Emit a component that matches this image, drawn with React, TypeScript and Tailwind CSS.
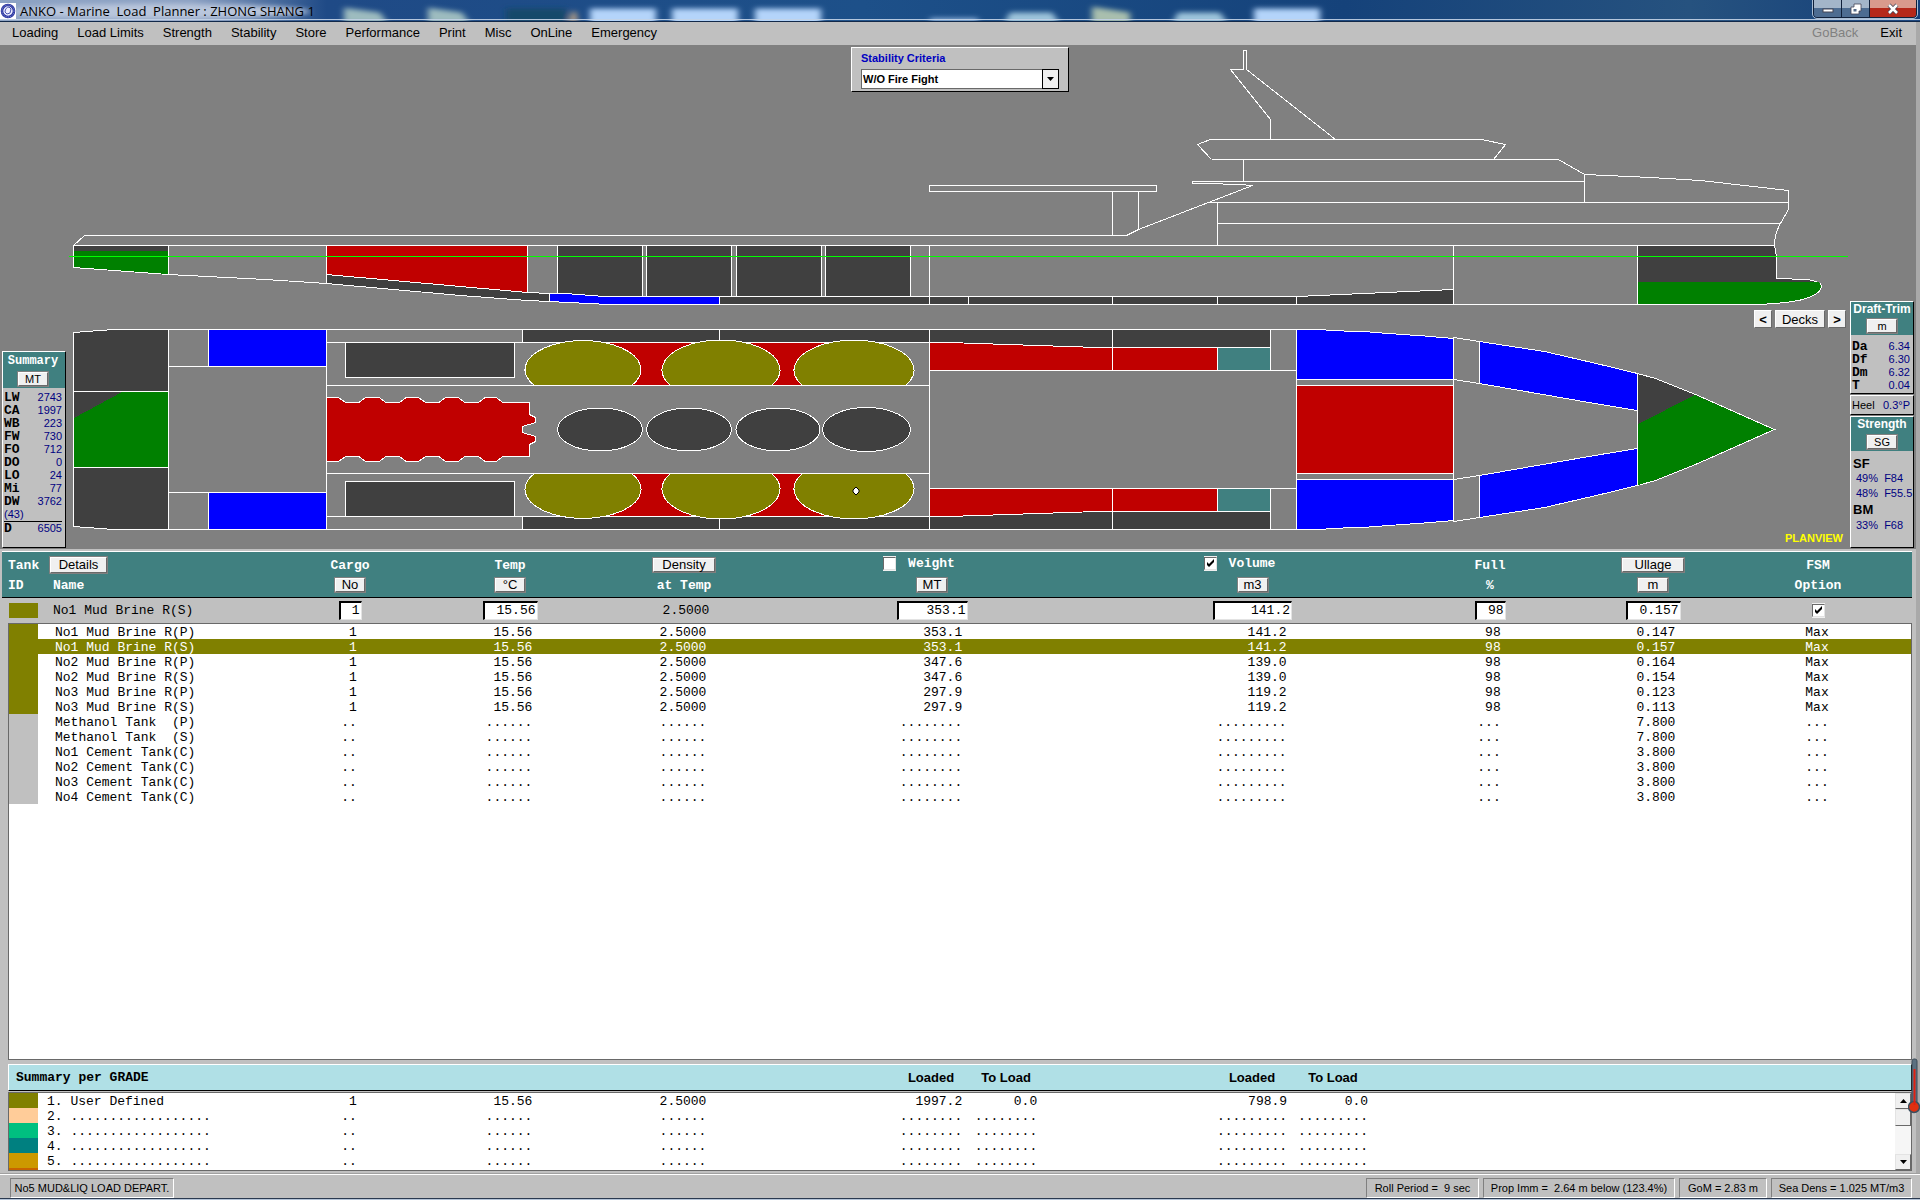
import { useState } from "react";
import type { ReactNode } from "react";

type Tank = {
  name: string;
  cargo?: string;
  temp?: string;
  density?: string;
  weight?: string;
  volume?: string;
  full?: string;
  ullage: string;
  fsm?: string;
};

type Point = [number, number];

const MENU = [
  "Loading",
  "Load Limits",
  "Strength",
  "Stability",
  "Store",
  "Performance",
  "Print",
  "Misc",
  "OnLine",
  "Emergency",
];

const brine = (
  name: string,
  weight: string,
  volume: string,
  ullage: string
): Tank => ({
  name,
  cargo: "1",
  temp: "15.56",
  density: "2.5000",
  weight,
  volume,
  full: "98",
  ullage,
  fsm: "Max",
});

const TANKS: Tank[] = [
  brine("No1 Mud Brine R(P)", "353.1", "141.2", "0.147"),
  brine("No1 Mud Brine R(S)", "353.1", "141.2", "0.157"),
  brine("No2 Mud Brine R(P)", "347.6", "139.0", "0.164"),
  brine("No2 Mud Brine R(S)", "347.6", "139.0", "0.154"),
  brine("No3 Mud Brine R(P)", "297.9", "119.2", "0.123"),
  brine("No3 Mud Brine R(S)", "297.9", "119.2", "0.113"),
  { name: "Methanol Tank  (P)", ullage: "7.800" },
  { name: "Methanol Tank  (S)", ullage: "7.800" },
  { name: "No1 Cement Tank(C)", ullage: "3.800" },
  { name: "No2 Cement Tank(C)", ullage: "3.800" },
  { name: "No3 Cement Tank(C)", ullage: "3.800" },
  { name: "No4 Cement Tank(C)", ullage: "3.800" },
];

const GRADES = [
  { color: "bg-[#808000]", name: "User Defined", used: true },
  { color: "bg-[#ffcc99]", name: "", used: false },
  { color: "bg-[#00c080]", name: "", used: false },
  { color: "bg-[#008080]", name: "", used: false },
  { color: "bg-[#cc9900]", name: "", used: false },
];

const SUMMARY = [
  ["LW", "2743"],
  ["CA", "1997"],
  ["WB", "223"],
  ["FW", "730"],
  ["FO", "712"],
  ["DO", "0"],
  ["LO", "24"],
  ["Mi", "77"],
  ["DW", "3762"],
];

const DRAFTS = [
  ["Da", "6.34"],
  ["Df", "6.30"],
  ["Dm", "6.32"],
  ["T", "0.04"],
];

// right-align a value in a field of fixed width, dots when it is empty
const field = (value: string | undefined, width: number) =>
  value ? value.padStart(width) : ".".repeat(width);

const PANEL =
  "bg-[#c0c0c0] border border-t-white border-l-white border-r-black border-b-black";
const SANS = "font-['Liberation_Sans',Arial,sans-serif]";
const MONO = "font-['Liberation_Mono','Courier_New',monospace]";

function Btn({
  children,
  className = "",
}: {
  children: ReactNode;
  className?: string;
}) {
  return (
    <button
      type="button"
      className={`${SANS} inline-flex items-center justify-center bg-[#f0f0f0] border border-t-white border-l-white border-r-[#696969] border-b-[#696969] outline outline-[#808080] text-black leading-none whitespace-nowrap ${className}`}
    >
      {children}
    </button>
  );
}

function Check({
  label,
  checked,
  onChange,
}: {
  label: string;
  checked: boolean;
  onChange: () => void;
}) {
  return (
    <span className="relative inline-flex w-[13px] h-[15px] bg-[#f0f0f0]">
      <input
        type="checkbox"
        aria-label={label}
        checked={checked}
        onChange={onChange}
        className="appearance-none w-[13px] h-[13px] mt-px bg-white border border-t-[#696969] border-l-[#696969] border-r-[#e3e3e3] border-b-[#e3e3e3]"
      />
      {checked && (
        <svg
          viewBox="0 0 13 13"
          className="absolute left-0 top-px w-[13px] h-[13px] pointer-events-none"
        >
          <path d="M3 5v3l2 2 5-5V2L5 7z" fill="#000" />
        </svg>
      )}
    </span>
  );
}

function TitleBar() {
  return (
    <header className="relative h-[22px] shrink-0 overflow-hidden bg-[#1b4b86] border-b border-[#12294a]">
      <svg
        className="absolute inset-0 w-full h-full"
        viewBox="0 0 1920 22"
        preserveAspectRatio="none"
        aria-hidden="true"
      >
        <defs>
          <linearGradient id="bar">
            <stop offset="0" stopColor="#8da3c4" />
            <stop offset="0.1" stopColor="#8ba0c2" />
            <stop offset="0.17" stopColor="#1f4a86" />
            <stop offset="0.45" stopColor="#1d5089" />
            <stop offset="0.7" stopColor="#15427a" />
            <stop offset="0.88" stopColor="#26527f" />
            <stop offset="1" stopColor="#15407a" />
          </linearGradient>
          <filter id="soft" x="-20%" y="-50%" width="140%" height="200%">
            <feGaussianBlur stdDeviation="3" />
          </filter>
        </defs>
        <rect width="1920" height="22" fill="url(#bar)" />
        <g filter="url(#soft)">
          <ellipse cx="160" cy="12" rx="150" ry="8" fill="#b9c6dc" />
          <path d="M344 8l36 5 8 12h-44z" fill="#9dbcbf" />
          <path d="M428 8l34 5 8 12h-42z" fill="#9dbcbf" />
          <rect x="506" y="9" width="60" height="16" fill="#17486b" />
          <path d="M572 12h4l2 12h-10z" fill="#b59f86" />
          <rect x="590" y="9" width="66" height="20" fill="#b4d4fa" />
          <rect x="672" y="9" width="66" height="20" fill="#b4d4fa" />
          <rect x="755" y="9" width="66" height="20" fill="#b4d4fa" />
          <rect x="930" y="19" width="48" height="6" fill="#8fb4dd" />
          <path d="M1010 13h42l8 12h-56z" fill="#9ec5dc" />
          <path d="M1092 7l38 6v12h-38z" fill="#a9bfae" />
          <path d="M1178 13h42l8 12h-56z" fill="#9ec5dc" />
          <rect x="1254" y="9" width="66" height="20" fill="#b4d4fa" />
        </g>
        <rect y="20" width="1920" height="1" fill="#c3d3e6" />
      </svg>
      <div className="relative flex items-start justify-between">
        <div className="flex items-center gap-1 h-[21px]">
          <svg viewBox="0 0 16 16" className="w-4 h-4 bg-white">
            <circle
              cx="8"
              cy="8"
              r="6"
              fill="#eef"
              stroke="#2a35a0"
              strokeWidth="2.6"
            />
            <circle
              cx="8"
              cy="8"
              r="6"
              fill="none"
              stroke="#8d97d8"
              strokeDasharray="1 1"
            />
            <path
              d="M5 9c0-3 2-5 4-5l2 2-1 4-3 1z"
              fill="none"
              stroke="#4a55b0"
            />
          </svg>
          <h1 className="font-['Open_Sans','Segoe_UI',sans-serif] text-[13px] leading-5 whitespace-pre text-black">
            ANKO - Marine  Load  Planner : ZHONG SHANG 1
          </h1>
        </div>
        <div className="flex mr-[3px] h-[18px] rounded-b border border-t-0 border-[#10203a] outline outline-[#a9bdd4] overflow-hidden">
          <button
            type="button"
            aria-label="Minimize"
            className="w-7 flex items-center justify-center bg-linear-to-b from-[#a3b5c9] from-45% to-[#4d6c91] to-50% border-r border-[#10203a]"
          >
            <svg viewBox="0 0 12 12" className="w-3 h-3">
              <rect x="1" y="6" width="10" height="3" fill="#fff" stroke="#445" />
            </svg>
          </button>
          <button
            type="button"
            aria-label="Restore"
            className="w-7 flex items-center justify-center bg-linear-to-b from-[#a3b5c9] from-45% to-[#4d6c91] to-50% border-r border-[#10203a]"
          >
            <svg viewBox="0 0 12 12" className="w-3 h-3">
              <path
                d="M4 1h7v7H9v3H1V4h3z"
                fill="#fff"
                stroke="#445"
                strokeWidth=".8"
              />
              <rect x="3.500" y="6" width="3" height="2.500" fill="#556b88" />
            </svg>
          </button>
          <button
            type="button"
            aria-label="Close"
            className="w-[46px] flex items-center justify-center bg-linear-to-b from-[#d99a8d] from-45% to-[#b5281a] to-50%"
          >
            <svg viewBox="0 0 12 12" className="w-3 h-3">
              <path d="M2 2l8 8M10 2l-8 8" stroke="#445" strokeWidth="4" />
              <path d="M2 2l8 8M10 2l-8 8" stroke="#fff" strokeWidth="2.500" />
            </svg>
          </button>
        </div>
      </div>
    </header>
  );
}

const DARK = "#404040";
const RED = "#c00000";
const BLUE = "#0000ff";
const GREEN = "#008000";
const OLIVE = "#808000";
const TEAL = "#408080";

const pts = (list: Point[]) => list.map((p) => p.join(",")).join(" ");

// a run of the wavy edge on the centre mud tank
const wave: Point[] = [326.5, 379, 418.5, 458, 496].flatMap((x, i) => {
  const end = i === 0 ? 338.5 : x;
  return [
    [end, 397.5],
    [end + 7, 402.5],
    ...(i < 4 ? [[end + 20.5, 402.5], [end + 27, 397.5]] : []),
  ] as Point[];
});

const mudTop: Point[] = [
  [326.5, 397.5],
  ...wave,
  [529.5, 402.5],
  [529.5, 414.5],
  [535.5, 417.5],
  [535.5, 422.5],
  [522.5, 426.5],
];
const mudTank: Point[] = [
  ...mudTop,
  ...mudTop.map(([x, y]): Point => [x, 859 - y]).reverse(),
];

// everything that the plan view has on both sides of the centre line
function PlanSide() {
  return (
    <>
      <polygon
        points="73.500,391.500 73.500,332.500 113.500,329.500 168.500,329.500 168.500,391.500"
        fill={DARK}
      />
      <path d="M168.500 329.500H1296.500M168.500 366.500h158" />
      <rect x="208.500" y="329.500" width="118" height="37" fill={BLUE} />
      <path d="M326.500 342.500h603M326.500 385.500h603" />
      <rect x="345.500" y="342.500" width="169" height="35" fill={DARK} />
      <rect x="522.500" y="329.500" width="197" height="13" fill={DARK} />
      <rect x="719.500" y="329.500" width="210" height="13" fill={DARK} />
      <rect x="582.500" y="342.500" width="272" height="43" fill={RED} />
      <path d="M534.500 385.500A58 29 0 1 1 631.500 385.500z" fill={OLIVE} />
      <path d="M670.500 385.500A59 30 0 1 1 771.500 385.500z" fill={OLIVE} />
      <path d="M802.500 385.500A60 30 0 1 1 905.500 385.500z" fill={OLIVE} />
      <path d="M929.500 329.500h183v18h-15L948.500 342.500h-19z" fill={DARK} />
      <rect x="1112.500" y="329.500" width="158" height="18" fill={DARK} />
      <path d="M929.500 342.500h19L1097.500 347.500h15v23h-183z" fill={RED} />
      <rect x="1112.500" y="347.500" width="105" height="23" fill={RED} />
      <rect x="1217.500" y="347.500" width="53" height="23" fill={TEAL} />
      <path d="M1270.500 370.500h26" />
      <polygon
        points="1296.500,329.500 1317.500,329.500 1343.500,331 1369.500,332 1388.500,333.500 1424.500,336 1453.500,338.500 1453.500,379.500 1296.500,379.500"
        fill={BLUE}
      />
      <path d="M1296.500 385.500h157M1453.500 337.500L1479.500 341.500M1453.500 379.500L1479.500 383.500" />
      <polygon
        points="1479.500,341.500 1544.500,351.500 1600.500,364.500 1637.500,373.500 1637.500,410.500 1600.500,404.500 1479.500,383.500"
        fill={BLUE}
      />
    </>
  );
}

function ShipDrawing() {
  return (
    <svg
      viewBox="0 45 1916 504"
      className="block w-full h-auto"
      shapeRendering="crispEdges"
      stroke="#fff"
      fill="none"
      role="img"
      aria-label="Ship profile and plan view"
    >
      {/* profile: hull and superstructure */}
      <path d="M73.500 245.500L84.500 235.500H1126.500L1138.500 229.500L1252.500 185.500L1238.500 184.500L1207.500 183.500H1192.500V181.500H1584.500" />
      <path d="M929.500 185.500h227v6h-227zM1112.500 191.500v44M1138.500 191.500v38" />
      <path d="M1217.500 245.500v-43M1209.500 202.500H1788.500M1217.500 223.500H1780.500" />
      <path d="M1211.500 159.500L1197.500 144.500L1210.500 139.500H1481.500L1505.500 144.500L1493.500 159.500" />
      <path d="M1211.500 159.500H1558.500L1584.500 174.500L1650.500 177.500L1700.500 180.500L1788.500 190.500V209.500L1780.500 223.500Q1774.500 233.500 1774.500 245.500" />
      <path d="M1584.500 174.500v28M1243.500 159.500v22" />
      <path d="M1335.500 139.500L1246.500 69.500V50.500H1243.500V69.500H1230.500L1270.500 119.500V139.500" />

      {/* profile: tanks */}
      <polygon points="73.500,245.500 168.500,245.500 168.500,274.500 73.500,267.500" fill={DARK} />
      <polygon points="74,251 168,251 168,274 74,267" fill={GREEN} stroke="none" />
      <path d="M168.500 274.500L265.500 279.500L326.500 283.500" />
      <polygon
        points="326.500,274.500 527.500,292.500 549.500,293.500 549.500,301.500 527.500,300.500 460.500,295.500 326.500,283.500"
        fill={DARK}
      />
      <polygon points="326.500,245.500 527.500,245.500 527.500,292.500 326.500,274.500" fill={RED} />
      <rect x="557.500" y="245.500" width="85" height="51" fill={DARK} />
      <rect x="646.500" y="245.500" width="85" height="51" fill={DARK} />
      <rect x="736.500" y="245.500" width="85" height="51" fill={DARK} />
      <rect x="825.500" y="245.500" width="85" height="51" fill={DARK} />
      <polygon
        points="549.500,293.500 565.500,293.500 604.500,296.500 719.500,296.500 719.500,304.500 608.500,304.500 549.500,301.500"
        fill={BLUE}
      />
      <polygon
        points="719.500,296.500 1296.500,296.500 1453.500,289.500 1453.500,304.500 719.500,304.500"
        fill={DARK}
      />
      <path d="M968.500 296.500v8M1112.500 296.500v8M1217.500 296.500v8M1296.500 296.500v8" />
      <path d="M929.500 245.500v59M1453.500 245.500v59" />
      <path
        d="M1637.500 245.500H1774.500L1776.500 256.500V278.500L1806.500 279.500Q1821.500 281.500 1821.500 286.500Q1820.500 295.500 1798.500 300.500L1786.500 302.500L1760.500 304.500H1637.500z"
        fill={DARK}
      />
      <path
        d="M1638 282H1819L1821 286Q1820 295 1798 300L1786 302L1760 304H1638z"
        fill={GREEN}
        stroke="none"
      />
      <path d="M73.500 245.500H1774.500M719.500 304.500H1760.500" />
      <path d="M69 256.500H1848" stroke="#00ff00" />

      {/* plan view */}
      <PlanSide />
      <g transform="matrix(1 0 0 -1 0 859)">
        <PlanSide />
      </g>
      <rect x="73.500" y="391.500" width="95" height="76" fill={DARK} />
      <path d="M74 418L122 392H168V467H74z" fill={GREEN} stroke="none" />
      <path d="M168.500 329.500v200M326.500 329.500v200M929.500 329.500v200M1296.500 329.500v200" />
      <polygon points={pts(mudTank)} fill={RED} />
      <ellipse cx="600" cy="429.500" rx="42.500" ry="21.500" fill={DARK} />
      <ellipse cx="689" cy="429.500" rx="42.500" ry="21.500" fill={DARK} />
      <ellipse cx="778" cy="429.500" rx="42" ry="21.500" fill={DARK} />
      <ellipse cx="866.500" cy="429.500" rx="44" ry="22" fill={DARK} />
      <rect x="1296.500" y="385.500" width="157" height="88" fill={RED} />
      <path d="M1453.500 337.500v184" />
      <path
        d="M1637.500 373.500L1655.500 378.500L1695.500 394.500L1774.500 429.500L1695.500 464.500L1655.500 480.500L1637.500 485.500z"
        fill={DARK}
      />
      <path
        d="M1638 424L1695 395L1773 429.500L1695 464L1655 480L1638 485z"
        fill={GREEN}
        stroke="none"
      />
      <path
        d="M856 487l3 3v2l-3 3-3-3v-2z"
        fill="#fff"
        stroke="#000"
        shapeRendering="auto"
      />
    </svg>
  );
}

function Row({ name, value }: { name: string; value: string }) {
  return (
    <div className="flex justify-between items-center h-[13px]">
      <dt className={`${MONO} text-[13px] leading-[13px] font-bold`}>{name}</dt>
      <dd className="text-[11px] leading-[13px] text-[#000080]">{value}</dd>
    </div>
  );
}

function SummaryPanel() {
  return (
    <section className={`${PANEL} w-16 h-[197px] flex flex-col`}>
      <div className="bg-[#408080] h-9 flex flex-col items-center shrink-0 pt-[3px] pr-[2px] gap-1">
        <h2 className={`${MONO} text-[12px] leading-[13px] font-bold text-white`}>
          Summary
        </h2>
        <Btn className="w-[30px] h-[14px] text-[11px]">MT</Btn>
      </div>
      <dl className="pl-px pr-[3px] pt-[3px]">
        {SUMMARY.map(([name, value]) => (
          <Row key={name} name={name} value={value} />
        ))}
        <dd className="text-[11px] leading-[13px] text-[#000080] border-b border-black">
          (43)
        </dd>
        <Row name="D" value="6505" />
      </dl>
    </section>
  );
}

function DraftPanels() {
  return (
    <div className="w-16 flex flex-col gap-px">
      <section className={`${PANEL} h-[93px]`}>
        <div className="bg-[#408080] h-[33px] flex flex-col items-center pt-px gap-[3px]">
          <h2 className="text-[12px] leading-[13px] font-bold text-white whitespace-nowrap">
            Draft-Trim
          </h2>
          <Btn className="w-[30px] h-[14px] text-[11px]">m</Btn>
        </div>
        <dl className="pl-px pr-[3px] pt-[5px]">
          {DRAFTS.map(([name, value]) => (
            <Row key={name} name={name} value={value} />
          ))}
        </dl>
      </section>
      <section
        className={`${PANEL} h-5 flex items-center justify-between pl-px pr-[3px] text-[11px]`}
      >
        <span>Heel</span>
        <span className="text-[#000080]">0.3°P</span>
      </section>
      <section className={`${PANEL} h-[132px]`}>
        <div className="bg-[#408080] h-[34px] flex flex-col items-center pt-px gap-1">
          <h2 className="text-[12px] leading-[13px] font-bold text-white">
            Strength
          </h2>
          <Btn className="w-[30px] h-[14px] text-[11px]">SG</Btn>
        </div>
        <div className="pl-[2px] pt-[5px] text-[11px] leading-[15px] text-[#000080] whitespace-pre">
          <h3 className="text-[13px] font-bold text-black">SF</h3>
          <p className="pl-[3px]">49%  F84</p>
          <p className="pl-[3px]">48%  F55.5</p>
          <h3 className="text-[13px] leading-[17px] font-bold text-black">BM</h3>
          <p className="pl-[3px]">33%  F68</p>
        </div>
      </section>
    </div>
  );
}

function TankColumns({ first }: { first: string }) {
  return (
    <colgroup>
      <col className={first} />
      <col className="w-[262px]" />
      <col className="w-[98px]" />
      <col className="w-[222px]" />
      <col className="w-[126px]" />
      <col className="w-[370px]" />
      <col />
      <col className="w-[204px]" />
      <col className="w-[122px]" />
      <col className="w-[198px]" />
    </colgroup>
  );
}

function Entry({
  label,
  value,
  className,
}: {
  label: string;
  value: string;
  className: string;
}) {
  return (
    <input
      aria-label={label}
      defaultValue={value}
      className={`h-[19px] bg-white text-right text-[13px] pr-px border-2 border-t-black border-l-black border-r border-b border-r-[#e3e3e3] border-b-[#e3e3e3] align-middle ${className}`}
    />
  );
}

function GradeColumns() {
  return (
    <colgroup>
      <col className="w-[29px]" />
      <col className="w-[262px]" />
      <col className="w-[98px]" />
      <col className="w-[222px]" />
      <col className="w-[126px]" />
      <col className="w-[142px]" />
      <col className="w-[86px]" />
      <col className="w-[64px]" />
      <col />
      <col className="w-[86px]" />
      <col className="w-[76px]" />
      <col className="w-[524px]" />
    </colgroup>
  );
}

export default function App() {
  const [selected, setSelected] = useState(1);
  const [byWeight, setByWeight] = useState(false);
  const [byVolume, setByVolume] = useState(true);
  const [fsm, setFsm] = useState(true);
  const tank = TANKS[selected];

  return (
    <div
      className={`${SANS} min-h-screen flex flex-col bg-[#c0c0c0] text-black leading-none`}
    >
      <TitleBar />
      <div className="grow flex flex-col border-r-4 border-[#a9a9a9]">
        <nav className="h-[23px] flex items-center justify-between pl-3 pr-[14px] pb-[2px] text-[13px]">
          <div className="flex gap-[19px]">
            {MENU.map((item) => (
              <button key={item} type="button">
                {item}
              </button>
            ))}
          </div>
          <div className="flex gap-[22px]">
            <button type="button" className="text-[#808080]">
              GoBack
            </button>
            <button type="button">Exit</button>
          </div>
        </nav>

        {/* Ship view with its floating panels */}
        <div className="relative bg-[#808080]">
          <ShipDrawing />
          <div
            className={`${PANEL} absolute left-[851px] top-[2px] w-[218px] h-[45px] pl-[9px] pt-[3px]`}
          >
            <label
              htmlFor="criteria"
              className="block text-[11px] leading-[15px] font-bold text-[#0000c0]"
            >
              Stability Criteria
            </label>
            <div className="relative w-[198px] mt-[3px]">
              <select
                id="criteria"
                className="appearance-none block w-full h-5 bg-white border border-[#696969] pl-px text-[11px] font-bold"
              >
                <option>W/O Fire Fight</option>
              </select>
              <span className="absolute right-0 top-0 w-[17px] h-5 bg-[#f0f0f0] border border-black flex items-center justify-center pointer-events-none">
                <svg viewBox="0 0 7 4" className="w-[7px] h-1">
                  <path d="M0 0h7L3.500 4z" />
                </svg>
              </span>
            </div>
          </div>
          <div className="absolute left-[2px] bottom-px">
            <SummaryPanel />
          </div>
          <div className="absolute right-[2px] bottom-px">
            <DraftPanels />
          </div>
          <div className="absolute right-[70px] top-[265px] flex gap-[3px] text-[13px]">
            <Btn className="w-[18px] h-[18px] font-bold">&lt;</Btn>
            <Btn className="w-[50px] h-[18px]">Decks</Btn>
            <Btn className="w-[18px] h-[18px] font-bold">&gt;</Btn>
          </div>
          <div className="absolute right-[73px] bottom-1 text-[11px] leading-[13px] font-bold text-[#ffff00]">
            PLANVIEW
          </div>
        </div>

        <main className={`${MONO} grow flex flex-col pt-[2px] text-[13px]`}>
          <div className="mr-1">
            <table className="w-full table-fixed border-collapse text-center">
              <TankColumns first="w-[38px]" />
              <thead className="bg-[#408080] text-white border-l-2 border-t border-t-white border-l-[#c0c0c0] border-b border-b-black">
                <tr className="h-[26px]">
                  <th className="text-left pl-[6px] pt-[2px]">Tank</th>
                  <th className="text-left pl-[11px]">
                    <Btn className="w-[57px] h-4 text-[13px] font-normal">
                      Details
                    </Btn>
                  </th>
                  <th className="pt-[2px]">Cargo</th>
                  <th className="pt-[2px]">Temp</th>
                  <th>
                    <Btn className="w-[62px] h-[14px] text-[13px] font-normal">
                      Density
                    </Btn>
                  </th>
                  <th>
                    <span className="inline-flex items-center gap-3 pr-[26px]">
                      <Check
                        label="Weight"
                        checked={byWeight}
                        onChange={() => setByWeight(!byWeight)}
                      />
                      Weight
                    </span>
                  </th>
                  <th>
                    <span className="inline-flex items-center gap-3 pr-[26px]">
                      <Check
                        label="Volume"
                        checked={byVolume}
                        onChange={() => setByVolume(!byVolume)}
                      />
                      Volume
                    </span>
                  </th>
                  <th className="pt-[2px]">Full</th>
                  <th>
                    <Btn className="w-[62px] h-[14px] text-[13px] font-normal">
                      Ullage
                    </Btn>
                  </th>
                  <th className="pl-[10px] pt-[2px]">FSM</th>
                </tr>
                <tr className="h-5 align-top">
                  <th className="text-left pl-[6px] pt-px">ID</th>
                  <th className="text-left pl-[14px] pt-px">Name</th>
                  <th>
                    <Btn className="w-[30px] h-[14px] text-[13px] font-normal">No</Btn>
                  </th>
                  <th>
                    <Btn className="w-[30px] h-[14px] text-[13px] font-normal">°C</Btn>
                  </th>
                  <th className="pt-px">at Temp</th>
                  <th>
                    <Btn className="w-[30px] h-[14px] text-[13px] font-normal">MT</Btn>
                  </th>
                  <th>
                    <Btn className="w-[30px] h-[14px] text-[13px] font-normal">m3</Btn>
                  </th>
                  <th className="pt-px">%</th>
                  <th>
                    <Btn className="w-[30px] h-[14px] text-[13px] font-normal">m</Btn>
                  </th>
                  <th className="pt-px pl-[10px]">Option</th>
                </tr>
              </thead>
              <tbody key={selected}>
                <tr className="h-[25px]">
                  <td className="pl-2">
                    <div className="w-[29px] h-[15px] bg-[#808000]" />
                  </td>
                  <td className="text-left pl-[14px] whitespace-pre">
                    {tank.name}
                  </td>
                  <td>
                    <Entry label="Cargo" value={tank.cargo ?? ""} className="w-[23px]" />
                  </td>
                  <td>
                    <Entry label="Temp" value={tank.temp ?? ""} className="w-[55px]" />
                  </td>
                  <td className="whitespace-pre pl-1">{field(tank.density, 6)}</td>
                  <td>
                    <Entry label="Weight" value={tank.weight ?? ""} className="w-[71px]" />
                  </td>
                  <td>
                    <Entry label="Volume" value={tank.volume ?? ""} className="w-[79px]" />
                  </td>
                  <td>
                    <Entry label="Full %" value={tank.full ?? ""} className="w-[31px]" />
                  </td>
                  <td>
                    <Entry label="Ullage" value={tank.ullage} className="w-[55px]" />
                  </td>
                  <td className="pl-[10px] align-middle">
                    <div className="flex justify-center">
                      <Check label="FSM option" checked={fsm} onChange={() => setFsm(!fsm)} />
                    </div>
                  </td>
                </tr>
              </tbody>
            </table>
          </div>

          <div className="grow ml-2 mr-1 min-h-[437px] bg-white border border-[#696969]">
            <table className="w-full table-fixed text-center whitespace-pre">
              <TankColumns first="w-[29px]" />
              <tbody>
                {TANKS.map((t, i) => (
                  <tr
                    key={t.name}
                    onClick={() => setSelected(i)}
                    className={`h-[15px] align-bottom ${i === selected ? "bg-[#808000] text-white" : ""}`}
                  >
                    <td className={t.cargo ? "bg-[#808000]" : "bg-[#c0c0c0]"} />
                    <td className="text-left pl-[17px]">{t.name}</td>
                    <td>{field(t.cargo, 2)}</td>
                    <td>{field(t.temp, 6)}</td>
                    <td>{field(t.density, 6)}</td>
                    <td>{field(t.weight, 8)}</td>
                    <td>{field(t.volume, 9)}</td>
                    <td>{field(t.full, 3)}</td>
                    <td>{field(t.ullage, 6)}</td>
                    <td className="pl-[10px]">{field(t.fsm, 3)}</td>
                  </tr>
                ))}
              </tbody>
            </table>
          </div>

          <div className="ml-2 mr-1 mt-1 pr-4 bg-[#b0e0e6] border border-t-white border-l-white border-r-black border-b-black">
            <table className="w-full table-fixed text-center">
              <GradeColumns />
              <thead>
                <tr className="h-[25px]">
                  <th colSpan={6} className="text-left pl-[7px]">
                    Summary per GRADE
                  </th>
                  <th className={SANS}>Loaded</th>
                  <th className={`${SANS} whitespace-nowrap`}>To Load</th>
                  <th />
                  <th className={SANS}>Loaded</th>
                  <th className={SANS}>To Load</th>
                  <th />
                </tr>
              </thead>
            </table>
          </div>
          <div className="ml-2 mr-1 mt-px mb-[2px] h-[79px] flex bg-white border border-[#696969] overflow-hidden">
            <div className="grow h-full overflow-hidden">
              <table className="w-full table-fixed text-center whitespace-pre">
                <GradeColumns />
                <tbody>
                  {GRADES.map((grade, i) => (
                    <tr key={grade.color} className="h-[15px] align-bottom">
                      <td className={grade.color} />
                      <td className="text-left pl-[9px]">
                        {`${i + 1}. ${grade.name || ".".repeat(18)}`}
                      </td>
                      <td>{field(grade.used ? "1" : "", 2)}</td>
                      <td>{field(grade.used ? "15.56" : "", 6)}</td>
                      <td>{field(grade.used ? "2.5000" : "", 6)}</td>
                      <td />
                      <td>{field(grade.used ? "1997.2" : "", 8)}</td>
                      <td>{field(grade.used ? "0.0" : "", 8)}</td>
                      <td />
                      <td>{field(grade.used ? "798.9" : "", 9)}</td>
                      <td>{field(grade.used ? "0.0" : "", 9)}</td>
                      <td />
                    </tr>
                  ))}
                </tbody>
              </table>
              <div className="w-[29px] h-[2px] bg-[#c86400]" />
            </div>
            <div className="w-4 shrink-0 h-full flex flex-col bg-[#f6f6f6]">
              <button
                type="button"
                aria-label="Scroll up"
                className="h-4 flex items-center justify-center bg-[#f0f0f0] border border-[#e3e3e3] border-r-[#696969] border-b-[#696969]"
              >
                <svg viewBox="0 0 7 4" className="w-[7px] h-1">
                  <path d="M0 4h7L3.500 0z" />
                </svg>
              </button>
              <div className="h-[17px] bg-[#f0f0f0] border border-[#e3e3e3] border-r-[#696969] border-b-[#696969]" />
              <button
                type="button"
                aria-label="Scroll down"
                className="mt-auto h-4 flex items-center justify-center bg-[#f0f0f0] border border-[#e3e3e3] border-r-[#696969] border-b-[#696969]"
              >
                <svg viewBox="0 0 7 4" className="w-[7px] h-1">
                  <path d="M0 0h7L3.500 4z" />
                </svg>
              </button>
            </div>
          </div>
        </main>
      </div>

      {/* Status bar */}
      <footer className="relative shrink-0 border-t border-[#a0a0a0]">
        <div className="flex gap-1 h-6 pt-[3px] pl-[10px] pr-2 border-t border-white text-[11px] whitespace-pre">
          <StatusCell className="w-[164px] mr-auto">
            No5 MUD&amp;LIQ LOAD DEPART.
          </StatusCell>
          <StatusCell className="w-[113px]">Roll Period =  9 sec</StatusCell>
          <StatusCell className="w-[192px]">
            Prop Imm =  2.64 m below (123.4%)
          </StatusCell>
          <StatusCell className="w-[88px]">GoM = 2.83 m</StatusCell>
          <StatusCell className="w-[141px]">Sea Dens = 1.025 MT/m3</StatusCell>
        </div>
        <div className="h-[2px] bg-[#b4c4d8] border-t border-[#2b3a50]" />
        <svg
          viewBox="0 0 12 56"
          className="absolute right-0 bottom-[86px] w-3 h-14"
          aria-hidden="true"
        >
          <rect x="4" y="1" width="5" height="48" rx="2" fill="#5c7080" stroke="#3c4c58" />
          <circle cx="6" cy="49" r="5.500" fill="#e03010" stroke="#3c5060" strokeWidth="1.500" />
          <path d="M6.500 11v36" stroke="#e02010" strokeWidth="2" />
        </svg>
      </footer>
    </div>
  );
}

function StatusCell({
  children,
  className,
}: {
  children: ReactNode;
  className: string;
}) {
  return (
    <div
      className={`h-5 flex items-center justify-center border border-t-[#808080] border-l-[#808080] border-r-white border-b-white ${className}`}
    >
      {children}
    </div>
  );
}
